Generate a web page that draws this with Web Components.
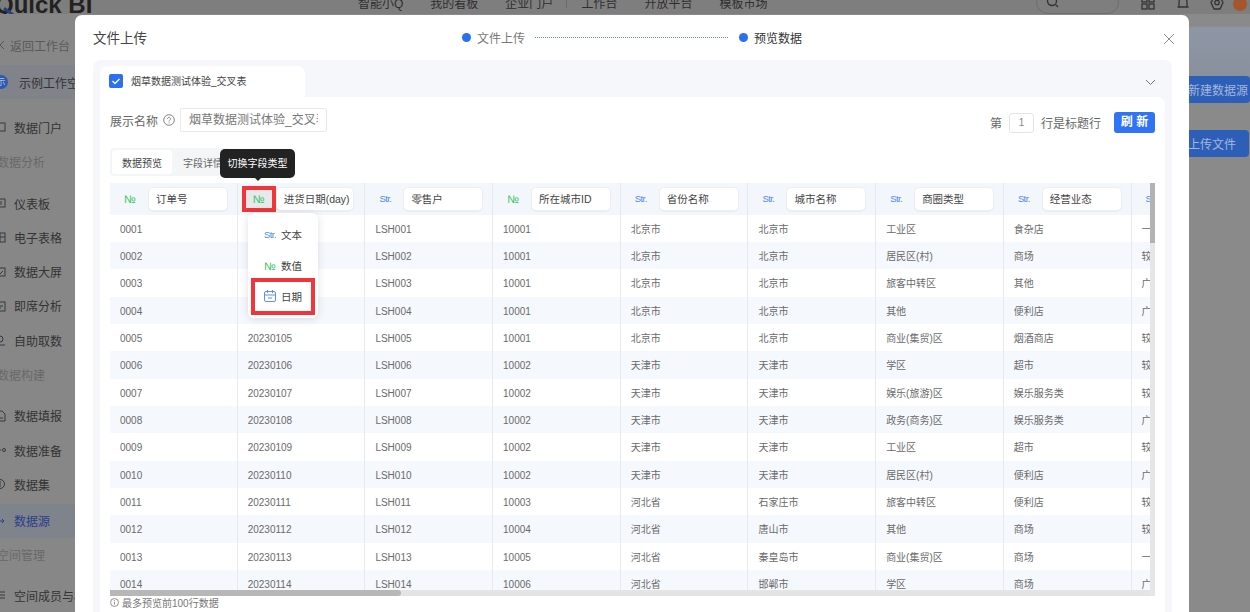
<!DOCTYPE html>
<html lang="zh">
<head>
<meta charset="utf-8">
<title>文件上传</title>
<style>
  html, body { margin: 0; height: 100%; overflow: hidden; }
  body { background: #8a8a8a; font-family: "Liberation Sans", "Noto Sans CJK SC", sans-serif; }
</style>
</head>
<body>
<qbi-app>
  <qbi-topbar slot="top"></qbi-topbar>
  <qbi-sidebar slot="side"></qbi-sidebar>
  <qbi-main slot="main"></qbi-main>
  <qbi-modal slot="modal" heading="文件上传">
    <qbi-steps slot="steps"></qbi-steps>
    <qbi-file-panel title-text="烟草数据测试体验_交叉表"></qbi-file-panel>
  </qbi-modal>
</qbi-app>

<script>
class QbiApp extends HTMLElement {
  connectedCallback() {
    this.attachShadow({ mode: "open" }).innerHTML = `
    <style>
      :host { display: grid; grid-template-columns: 160px 1fr; grid-template-rows: 14px 598px; width: 1250px; height: 612px; overflow: hidden; position: relative; }
      .top { grid-column: 1 / 3; display: block; }
    </style>
    <div class="top"><slot name="top"></slot></div>
    <slot name="side"></slot>
    <slot name="main"></slot>
    <slot name="modal"></slot>`;
  }
}

class QbiTopbar extends HTMLElement {
  connectedCallback() {
    this.attachShadow({ mode: "open" }).innerHTML = `
    <style>
      :host { display: block; height: 14px; overflow: hidden; background: #7e7e7e; color: #2e2e2e; position: relative; }
      .row { display: flex; align-items: center; height: 24px; margin-top: -10px; font-size: 12px; }
      .logo { width: 363px; flex: none; margin-left: -5px; margin-top: 6px; font-size: 24px; font-weight: 700; color: #222; white-space: nowrap; position: relative; }
      .logo::after { content: ""; position: absolute; left: 8px; top: 19px; width: 11px; height: 3px; background: #24427c; transform: rotate(35deg); }
      nav { display: flex; gap: 27px; }
      .bar { width: 1px; height: 14px; background: #6a6a6a; margin: 0 -13px 0 -14px; }
      .tools { margin-left: auto; display: flex; align-items: center; }
      .search { width: 83px; height: 24px; box-sizing: border-box; border: 1px solid #6e6e6e; border-radius: 12px; padding: 4px 0 0 9px; }
      svg { display: block; fill: none; stroke: #333; stroke-width: 1.3; }
      .tools svg.i { margin-top: 2px; }
      .avatar { width: 14px; height: 14px; border-radius: 50%; background: #a5562e; margin: 4px 3px 0 0; }
    </style>
    <div class="row">
      <div class="logo">Quick BI</div>
      <nav>
        <span>智能小Q</span><span>我的看板</span><span>企业门户</span><i class="bar"></i><span>工作台</span><span>开放平台</span><span>模板市场</span>
      </nav>
      <div class="tools">
        <div class="search"><svg width="13" height="13" viewBox="0 0 13 13"><circle cx="6" cy="6" r="4.500"/><path d="M9.500 9.500 12 12"/></svg></div>
        <svg class="i" style="margin-left:22px" width="14" height="14" viewBox="0 0 14 14"><rect x="1" y="1" width="5" height="5"/><rect x="8" y="1" width="5" height="5"/><rect x="1" y="8" width="5" height="5"/><rect x="8" y="8" width="5" height="5"/></svg>
        <svg class="i" style="margin-left:21px" width="14" height="14" viewBox="0 0 14 14"><path d="M3 11V6a4 4 0 0 1 8 0v5M1.500 11h11"/></svg>
        <svg class="i" style="margin-left:19px" width="16" height="14" viewBox="0 0 16 14"><path d="M5 1h6l3 5.500-3 6.500H5L2 6.500z"/><circle cx="8" cy="6.500" r="2.200"/></svg>
        <div class="avatar" style="margin-left:8px"></div>
      </div>
    </div>`;
  }
}

const NAV = [
  { t: "back", label: "返回工作台", mt: 14 },
  { t: "space", label: "示例工作空间", mt: 3 },
  { t: "item", label: "数据门户", mt: 11, icon: '<rect x="1" y="2" width="10" height="8"/>' },
  { t: "head", label: "数据分析" },
  { t: "item", label: "仪表板", mt: 7, icon: '<rect x="1" y="2" width="10" height="8"/><path d="M4 8V6M7 8V4"/>' },
  { t: "item", label: "电子表格", icon: '<rect x="1" y="2" width="10" height="9"/><path d="M1 6h10M6 2v9"/>' },
  { t: "item", label: "数据大屏", icon: '<rect x="1" y="2" width="10" height="8"/><path d="m4 6 2 2 3-3"/>' },
  { t: "item", label: "即席分析", icon: '<rect x="1" y="2" width="10" height="9"/><path d="M3 6h6M6 9V7"/>' },
  { t: "item", label: "自助取数", icon: '<circle cx="6" cy="5" r="3"/><path d="M2 11h9"/>' },
  { t: "head", label: "数据构建" },
  { t: "item", label: "数据填报", mt: 7, icon: '<path d="M3 1h5l3 3v7H3z"/><path d="M5 8h4"/>' },
  { t: "item", label: "数据准备", icon: '<circle cx="10" cy="6" r="1.500"/><path d="M1 6h6"/>' },
  { t: "item", label: "数据集", icon: '<circle cx="6" cy="6" r="4.500"/><path d="M6 3v6"/>' },
  { t: "item", label: "数据源", active: true, mt: 2, icon: '<path d="M1 6h9M8 4l2 2-2 2"/>' },
  { t: "head", label: "空间管理", mt: -1 },
  { t: "item", label: "空间成员与权限", mt: 7, icon: '<path d="M1 3h10M1 6h10M1 9h10"/>' }
];

class QbiSidebar extends HTMLElement {
  connectedCallback() {
    const rows = NAV.map(n => {
      const style = n.mt ? ` style="margin-top:${n.mt}px"` : "";
      if (n.t === "head") return `<div class="row head"${style}>${n.label}</div>`;
      if (n.t === "back") return `<div class="row back"${style}><svg width="6" height="10" viewBox="0 0 6 10"><path d="M5 1 1 5l4 4"/></svg>${n.label}</div>`;
      if (n.t === "space") return `<div class="row space"${style}><b>示</b>${n.label}</div>`;
      return `<div class="row item${n.active ? " on" : ""}"${style}><svg width="12" height="12" viewBox="0 0 12 12">${n.icon}</svg>${n.label}</div>`;
    }).join("");
    this.attachShadow({ mode: "open" }).innerHTML = `
    <style>
      :host { display: block; background: #878787; color: #333; font-size: 12px; overflow: hidden; }
      .row { display: flex; align-items: center; height: 34.300px; white-space: nowrap; margin-left: -6px; }
      svg { flex: none; fill: none; stroke: #383838; stroke-width: 1; }
      .head { color: #696969; padding-left: 3px; }
      .back { color: #5a5a5a; padding-left: 5px; gap: 5px; }
      .back svg { stroke: #555; }
      .space { background: #80838a; gap: 11px; height: 34px; }
      .space b { width: 14px; height: 14px; flex: none; border-radius: 50%; background: #2c5bb0; color: #a9bbdb; font-size: 9px; font-weight: 400; text-align: center; line-height: 14px; }
      .item { gap: 8px; }
      .on { background: #7f838c; color: #27408a; }
      .on svg { stroke: #27408a; }
    </style>${rows}`;
  }
}

class QbiMain extends HTMLElement {
  connectedCallback() {
    this.attachShadow({ mode: "open" }).innerHTML = `
    <style>
      :host { display: flex; flex-direction: column; align-items: flex-end; padding-top: 62px; box-sizing: border-box; font-size: 12px;
        background: linear-gradient(180deg, #8a8a8a 0, #8a8a8a 12px, #8e96a6 14px, #8a909c 62px, #8a8a8a 90px); }
      .btn { height: 27px; background: #2e5fb8; color: #a3b6da; display: flex; align-items: center; border-radius: 0 4px 4px 0; white-space: nowrap; width: 120px; box-sizing: border-box; padding-bottom: 1px; }
      .new { padding-left: 58px; }
      .up { padding-left: 59px; margin: 27px 1px 0 0; }
    </style>
    <div class="btn new">新建数据源</div>
    <div class="btn up">上传文件</div>`;
  }
}

class QbiModal extends HTMLElement {
  connectedCallback() {
    this.attachShadow({ mode: "open" }).innerHTML = `
    <style>
      :host { position: absolute; left: 75px; top: 15px; width: 1114px; height: 610px; background: #fff; border-radius: 7px 7px 0 0; display: flex; flex-direction: column; overflow: hidden; }
      header { height: 45px; flex: none; display: flex; align-items: center; padding: 0 14px 0 18px; color: #444; font-size: 13.500px; }
      .title { width: 369px; flex: none; margin-top: -1px; }
      .x { margin: 2px 0 0 auto; display: block; }
      .body { padding: 0 17px 0 18px; }
    </style>
    <header>
      <div class="title">${this.getAttribute("heading")}</div>
      <slot name="steps"></slot>
      <svg class="x" width="12" height="12" viewBox="0 0 12 12" fill="none" stroke="#8c8c8c" stroke-width="1"><path d="M1 1l10 10M11 1 1 11"/></svg>
    </header>
    <div class="body"><slot></slot></div>`;
  }
}

class QbiSteps extends HTMLElement {
  connectedCallback() {
    this.attachShadow({ mode: "open" }).innerHTML = `
    <style>
      :host { display: flex; align-items: center; font-size: 12px; color: #777; }
      i { width: 9px; height: 9px; border-radius: 50%; background: #2b6ff2; margin-right: 6px; flex: none; }
      .line { width: 193px; border-top: 1px dotted #5f86c8; margin: 0 11px 0 10px; }
      b { font-weight: 400; color: #333; }
      span, b { margin-top: -1px; }
    </style>
    <i></i><span>文件上传</span><div class="line"></div><i></i><b>预览数据</b>`;
  }
}

class QbiFilePanel extends HTMLElement {
  connectedCallback() {
    this.attachShadow({ mode: "open" }).innerHTML = `
    <style>
      :host { display: block; background: #f5f7fa; border-radius: 8px 8px 0 0; padding: 0 7px; color: #555; }
      .head { height: 37px; display: flex; align-items: flex-end; }
      .tab { width: 205px; height: 31px; box-sizing: border-box; background: #fff; border-radius: 8px 8px 0 0; display: flex; align-items: center; gap: 8px; padding: 0 0 2px 9px; font-size: 10px; color: #444; }
      .check { width: 14px; height: 14px; border-radius: 2px; background: #2b6ff2; display: block; }
      .chev { margin: 0 9px 11px auto; }
      .inner { background: #fff; border-radius: 0 8px 0 0; padding: 11px 10px 0; height: 560px; box-sizing: border-box; }
      .opts { display: flex; align-items: center; height: 24px; font-size: 12px; color: #666; }
      .help { margin: 0 5px 0 5px; display: block; }
      .name { width: 147px; height: 24px; box-sizing: border-box; border: 1px solid #e9e9e9; border-radius: 2px; padding: 0 8px; line-height: 22px; color: #777; }
      .name div { white-space: nowrap; overflow: hidden; }
      .rowno { margin-left: auto; display: flex; align-items: center; margin-top: 5px; }
      .no { width: 25px; height: 20px; box-sizing: border-box; margin: 0 7px; border: 1px solid #e4e4e4; border-radius: 3px; text-align: center; line-height: 18px; font-size: 10px; color: #888; }
      .refresh { width: 41px; height: 21px; margin-left: 13px; border-radius: 3px; background: #2e74f5; color: #fff; font-weight: 700; font-size: 12px; text-align: center; line-height: 21px; }
      .foot { display: flex; align-items: center; gap: 3px; height: 14px; margin-top: -1px; font-size: 10px; color: #777; }
    </style>
    <div class="head">
      <div class="tab">
        <svg class="check" viewBox="0 0 14 14" fill="none" stroke="#fff" stroke-width="1.400"><path d="m3.500 7 2.500 2.500 4.500-4.500"/></svg>
        ${this.getAttribute("title-text")}
      </div>
      <svg class="chev" width="11" height="7" viewBox="0 0 11 7" fill="none" stroke="#777"><path d="m1 1 4.500 4.500L10 1"/></svg>
    </div>
    <div class="inner">
      <div class="opts">
        展示名称
        <svg class="help" width="12" height="12" viewBox="0 0 12 12" fill="none" stroke="#777" stroke-width=".9"><circle cx="6" cy="6" r="5.300"/><path d="M4.500 4.800a1.500 1.500 0 1 1 2.300 1.300c-.6.400-.8.700-.8 1.300M6 8.400v1"/></svg>
        <div class="name"><div>${this.getAttribute("title-text")}</div></div>
        <div class="rowno">第<div class="no">1</div>行是标题行<div class="refresh">刷 新</div></div>
      </div>
      <qbi-tabs></qbi-tabs>
      <qbi-data-table></qbi-data-table>
      <div class="foot">
        <svg width="9" height="9" viewBox="0 0 10 10" fill="none" stroke="#777" stroke-width=".9"><circle cx="5" cy="5" r="4.400"/><path d="M5 4.300v3M5 2.400v1"/></svg>
        最多预览前100行数据
      </div>
    </div>`;
  }
}

class QbiTabs extends HTMLElement {
  connectedCallback() {
    this.attachShadow({ mode: "open" }).innerHTML = `
    <style>
      :host { display: flex; width: 120px; height: 28px; margin: 16px 0 7px; padding: 2px; box-sizing: border-box; background: #f4f5f7; border-radius: 4px; font-size: 10px; color: #666; white-space: nowrap; }
      div { display: flex; align-items: center; justify-content: center; width: 60px; flex: none; }
      .on { background: #fff; border-radius: 3px; color: #444; }
      .off { padding-left: 11px; justify-content: flex-start; box-sizing: border-box; }
    </style>
    <div class="on">数据预览</div><div class="off">字段详情</div>`;
  }
}

class QbiTypeBadge extends HTMLElement {
  connectedCallback() {
    const isNum = this.getAttribute("kind") === "num";
    this.attachShadow({ mode: "open" }).innerHTML = `
    <style>
      :host { display: inline-flex; align-items: center; justify-content: center; flex: none; width: var(--badge-w, 26px); height: 18px; white-space: nowrap;
        font-size: ${isNum ? "11px" : "9.500px"}; color: ${isNum ? "#2fc45e" : "#4f88ec"}; letter-spacing: ${isNum ? "0" : "-.6px"}; }
      :host([picked]) { background: #e6e8ea; outline: 4px solid #f0353b; }
    </style>${isNum ? "№" : "Str."}`;
  }
}

class QbiTypeMenu extends HTMLElement {
  connectedCallback() {
    this.attachShadow({ mode: "open" }).innerHTML = `
    <style>
      :host { position: absolute; left: 138px; top: 30px; width: 70px; height: 105px; box-sizing: border-box; padding: 5.500px 7px 0; background: #fff; border-radius: 6px; box-shadow: 0 1px 8px rgba(0,0,0,.12); font-size: 10.500px; color: #444; --badge-w: 12px; }
      div { display: flex; align-items: center; gap: 5px; height: 31.500px; padding-left: 9px; }
      .sel { outline: 4px solid #f0353b; height: 29px; }
      svg { display: block; flex: none; }
    </style>
    <div><qbi-type-badge kind="str"></qbi-type-badge>文本</div>
    <div><qbi-type-badge kind="num"></qbi-type-badge>数值</div>
    <div class="sel"><svg width="12" height="12" viewBox="0 0 12 12" fill="none" stroke="#5a90ee"><rect x=".5" y="1.500" width="11" height="10" rx="1.500"/><path d="M.5 5h11M3.500 0v3M8.500 0v3M4 8h4"/></svg>日期</div>`;
  }
}

class QbiFieldHead extends HTMLElement {
  connectedCallback() {
    const picked = this.hasAttribute("picked");
    this.attachShadow({ mode: "open" }).innerHTML = `
    <style>
      :host { display: flex; align-items: center; gap: 5px; padding-left: 7px; box-sizing: border-box; border-right: 1px solid #e6eaf0; overflow: hidden; }
      :host([picked]) { gap: 4px; padding-left: 8px; }
      .field { width: 80px; height: 24px; flex: none; box-sizing: border-box; background: #fff; border: 1px solid #eceef2; border-radius: 5px; box-shadow: 0 1px 1px rgba(0,0,0,.04); padding: 0 7px; line-height: 22px; font-size: 10.500px; color: #444; white-space: nowrap; overflow: hidden; }
      :host([picked]) .field { width: 78px; padding-right: 0; }
    </style>
    <qbi-type-badge kind="${this.getAttribute("kind")}" ${picked ? "picked" : ""}></qbi-type-badge>
    <div class="field">${this.getAttribute("name")}</div>`;
  }
}

const FIELDS = [
  ["num", "订单号"], ["num", "进货日期(day)"], ["str", "零售户"], ["num", "所在城市ID"],
  ["str", "省份名称"], ["str", "城市名称"], ["str", "商圈类型"], ["str", "经营业态"], ["str", "规模"]
];

const ROWS = [
  ["10001", "北京市", "北京市", "工业区", "食杂店", "一般"],
  ["10001", "北京市", "北京市", "居民区(村)", "商场", "较大"],
  ["10001", "北京市", "北京市", "旅客中转区", "其他", "广泛"],
  ["10001", "北京市", "北京市", "其他", "便利店", "广泛"],
  ["10001", "北京市", "北京市", "商业(集贸)区", "烟酒商店", "较大"],
  ["10002", "天津市", "天津市", "学区", "超市", "较大"],
  ["10002", "天津市", "天津市", "娱乐(旅游)区", "娱乐服务类", "较大"],
  ["10002", "天津市", "天津市", "政务(商务)区", "娱乐服务类", "广泛"],
  ["10002", "天津市", "天津市", "工业区", "超市", "较大"],
  ["10002", "天津市", "天津市", "居民区(村)", "便利店", "广泛"],
  ["10003", "河北省", "石家庄市", "旅客中转区", "便利店", "较大"],
  ["10004", "河北省", "唐山市", "其他", "商场", "较大"],
  ["10005", "河北省", "秦皇岛市", "商业(集贸)区", "商场", "一般"],
  ["10006", "河北省", "邯郸市", "学区", "商场", "广泛"]
];

class QbiDataTable extends HTMLElement {
  connectedCallback() {
    const heads = FIELDS.map(([k, n], i) =>
      `<qbi-field-head kind="${k}" name="${n}" ${i === 1 ? "picked" : ""}></qbi-field-head>`).join("");
    const rows = ROWS.map((r, i) => {
      const n = String(i + 1).padStart(2, "0");
      // the first four dates sit under the open type menu
      const cells = ["00" + n, i < 4 ? "" : "202301" + n, "LSH0" + n, ...r];
      return `<div class="tr">${cells.map(c => `<div class="td">${c}</div>`).join("")}</div>`;
    }).join("");
    this.attachShadow({ mode: "open" }).innerHTML = `
    <style>
      :host { display: block; position: relative; height: 413px; }
      .clip { height: 100%; overflow: hidden; }
      .thead, .tr { display: grid; grid-template-columns: repeat(9, 127.700px); width: 1149.300px; }
      .thead { height: 31.500px; background: #f3f6fb; }
      .tr { height: 27.350px; background: #fff; }
      .tr:nth-child(even) { background: #f5f8fd; }
      .td { padding: 2px 0 0 10px; box-sizing: border-box; border-right: 1px solid #e6eaf0; font-size: 10px; line-height: 25px; color: #6a6a6a; white-space: nowrap; overflow: hidden; }
      .tip { position: absolute; left: 110px; top: -34px; width: 75px; height: 29px; background: #222; border-radius: 5px; color: #fff; font-size: 10px; line-height: 29px; text-align: center; }
      .tip::after { content: ""; position: absolute; left: 34px; bottom: -3px; border: 4px solid transparent; border-bottom: 0; border-top-color: #222; }
      .vtrack { position: absolute; right: 0; top: 0; bottom: 0; width: 5px; background: #e6e6e6; }
      .vthumb { height: 60px; background: #b3b3b3; }
      .htrack { position: absolute; left: 0; right: 0; bottom: 0; height: 6px; background: #e4e4e4; }
      .hthumb { width: 291px; height: 100%; background: #b7b7b7; border-radius: 0 3px 3px 0; }
    </style>
    <div class="clip">
      <div class="thead">${heads}</div>
      <div class="tbody">${rows}</div>
    </div>
    <div class="htrack"><div class="hthumb"></div></div>
    <div class="vtrack"><div class="vthumb"></div></div>
    <div class="tip">切换字段类型</div>
    <qbi-type-menu></qbi-type-menu>`;
  }
}

customElements.define("qbi-app", QbiApp);
customElements.define("qbi-topbar", QbiTopbar);
customElements.define("qbi-sidebar", QbiSidebar);
customElements.define("qbi-main", QbiMain);
customElements.define("qbi-modal", QbiModal);
customElements.define("qbi-steps", QbiSteps);
customElements.define("qbi-file-panel", QbiFilePanel);
customElements.define("qbi-tabs", QbiTabs);
customElements.define("qbi-type-badge", QbiTypeBadge);
customElements.define("qbi-type-menu", QbiTypeMenu);
customElements.define("qbi-field-head", QbiFieldHead);
customElements.define("qbi-data-table", QbiDataTable);
</script>
</body>
</html>
